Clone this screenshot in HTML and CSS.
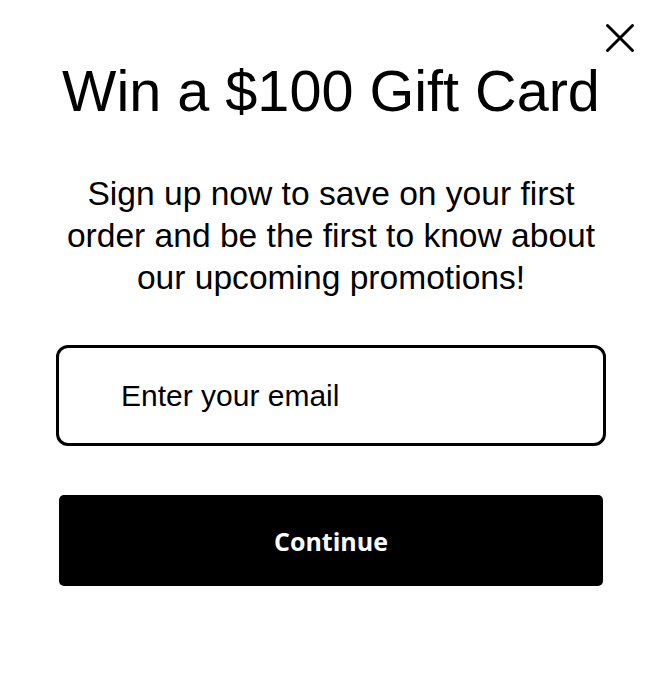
FILE: index.html
```html
<!DOCTYPE html>
<html lang="en">
  <head>
    <meta charset="UTF-8" />
    <title>Gift card signup</title>
    <link rel="stylesheet" href="styles.css">
  </head>
  <body>
    <div class="popup">
      <button class="popup-close" type="button" aria-label="Close">
        <svg width="30" height="30" viewBox="0 0 30 30">
          <path d="M2.5 2.5 L27.5 27.5 M27.5 2.5 L2.5 27.5" stroke="#000" stroke-width="3" stroke-linecap="round" fill="none" />
        </svg>
      </button>
      <h1 class="popup-title">Win a $100 Gift Card</h1>
      <p class="popup-text">Sign up now to save on your first order and be the first to know about our upcoming promotions!</p>
      <form class="popup-form">
        <input class="popup-input" type="email" placeholder="Enter your email" />
        <button class="popup-button" type="button">Continue</button>
      </form>
    </div>
  </body>
</html>
```

FILE: styles.css
```css
body {
  margin: 0;
  background: #fff;
  font-family: "Liberation Sans", Arial, sans-serif;
  color: #000;
}

.popup {
  position: relative;
  width: 550px;
  padding: 58px 54px 80px 56px;
  text-align: center;
}

/* close button in the corner */
.popup-close {
  position: absolute;
  top: 23px;
  right: 25px;
  padding: 0;
  border: 0;
  background: none;
  cursor: pointer;
  line-height: 0;
}

.popup-title {
  margin: 0;
  font-size: 57.6px;
  font-weight: 400;
  line-height: 1.15;
}

.popup-text {
  margin: 49px 0 0;
  font-size: 33.6px;
  line-height: 42px;
}

.popup-form {
  display: flex;
  flex-direction: column;
  align-items: center;
  margin-top: 46px;
}

.popup-input {
  box-sizing: border-box;
  width: 550px;
  height: 101px;
  padding: 0 0 0 62px;
  border: 3px solid #000;
  border-radius: 12px;
  font-family: "Liberation Sans", Arial, sans-serif;
  font-size: 30px;
  color: #000;
  outline: none;
}
.popup-input::placeholder {
  color: #000;
  opacity: 1;
}

.popup-button {
  width: 544px;
  height: 91px;
  margin-top: 49px;
  border: 0;
  border-radius: 5px;
  background: #000;
  color: #fff;
  font-family: "Open Sans", sans-serif;
  font-size: 25px;
  font-weight: 700;
  cursor: pointer;
}
```
